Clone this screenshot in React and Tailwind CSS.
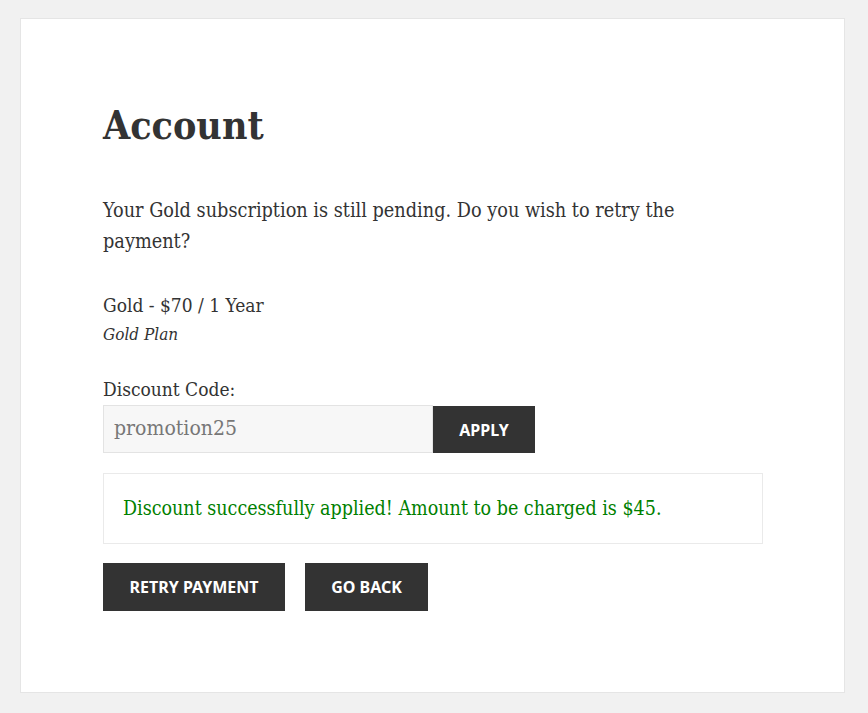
export default function App() {
  const serif = { fontFamily: '"DejaVu Serif Condensed", "DejaVu Serif", serif' };
  const sans = { fontFamily: '"Noto Sans", "Open Sans", sans-serif' };
  return (
    <div className="min-h-[713px] bg-[#f1f1f1] pt-[18px] pl-[20px] pr-[23px] pb-[20px]" style={serif}>
      <div className="bg-white border border-[#e5e5e5] min-h-[675px] pl-[82px] pr-[81px] pt-[77px] text-[#333333]">
        <h1 className="text-[39px] font-bold leading-[58px]">Account</h1>
        <p className="mt-[41px] text-[19.7px] leading-[31px] w-[600px]">
          Your Gold subscription is still pending. Do you wish to retry the payment?
        </p>
        <div className="mt-[33px] text-[19px] leading-[30px]">Gold - $70 / 1 Year</div>
        <div className="text-[17px] italic leading-[28px]">Gold Plan</div>
        <div className="mt-[27px] text-[19px] leading-[28px]">Discount Code:</div>
        <div className="flex mt-[2px]">
          <div className="w-[330px] h-[48px] bg-[#f7f7f7] border border-[#e3e3e3] flex items-center px-[10px] text-[21px] text-[#777]">
            promotion25
          </div>
          <button className="w-[102px] h-[47px] mt-[1px] bg-[#333333] text-white text-[16px] font-bold uppercase" style={sans}>
            Apply
          </button>
        </div>
        <div className="mt-[20px] w-[660px] h-[71px] border border-[#eaeaea] flex items-center px-[19px] text-[19.5px] text-[#008000]">
          Discount successfully applied! Amount to be charged is $45.
        </div>
        <div className="flex gap-[20px] mt-[19px]" style={sans}>
          <button className="w-[182px] h-[48px] bg-[#333333] text-white text-[16px] font-bold uppercase">Retry Payment</button>
          <button className="w-[123px] h-[48px] bg-[#333333] text-white text-[16px] font-bold uppercase">Go Back</button>
        </div>
      </div>
    </div>
  );
}
